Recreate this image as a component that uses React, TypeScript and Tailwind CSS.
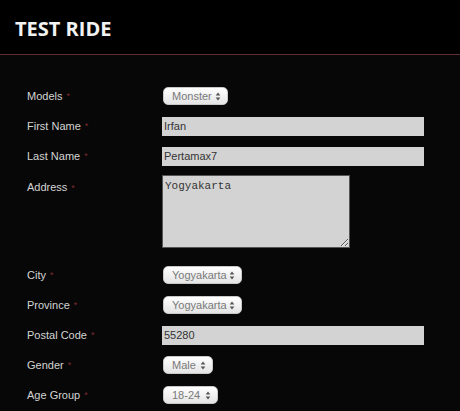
import { ReactNode } from 'react'

function Req() {
  return <span className="ml-[4px] text-[9px] leading-none text-[#7e2a33] align-middle">*</span>
}

function Row({ label, children, tall }: { label: string; children: ReactNode; tall?: boolean }) {
  return (
    <div className={`flex ${tall ? 'items-start h-[73px]' : 'items-center h-[20px]'}`}>
      <div className={`w-[135px] shrink-0 text-[11px] text-[#d4d4d4] ${tall ? 'pt-[4px]' : ''}`}>
        {label}
        <Req />
      </div>
      {children}
    </div>
  )
}

function Select({ value, width }: { value: string; width: string }) {
  return (
    <div
      className={`${width} ml-px h-[18px] flex items-center justify-between pl-[8px] pr-[6px] rounded-[5px] border border-[#c8c8c8] bg-linear-to-b from-white to-[#e4e4e4] text-[11px] text-[#7a7a7a] whitespace-nowrap`}
    >
      <span>{value}</span>
      <svg width="6" height="9" viewBox="0 0 6 10" className="fill-[#555] shrink-0">
        <path d="M3 0.5 L5.6 4 H0.4 Z" />
        <path d="M3 9.5 L5.6 6 H0.4 Z" />
      </svg>
    </div>
  )
}

function TextInput({ value }: { value: string }) {
  return (
    <input
      defaultValue={value}
      className="w-[262px] h-[19px] bg-[#d3d3d3] px-[2px] text-[11px] text-[#333] outline-none font-['Liberation_Sans',Arial,sans-serif]"
    />
  )
}

export default function App() {
  return (
    <div className="w-[460px] h-[411px] overflow-hidden bg-[#070707] font-['Liberation_Sans',Arial,sans-serif]">
      <div className="h-[55px] flex items-center px-[15px] bg-black border-b border-[#5e2e38]">
        <h1 className="font-['Open_Sans',sans-serif] font-bold text-[20px] text-[#f2f2f2] mt-[3px]">TEST RIDE</h1>
      </div>

      <div className="pl-[27px] pt-[31px] flex flex-col">
        <Row label="Models">
          <Select value="Monster" width="w-[65px]" />
        </Row>
        <div className="h-[10px]" />
        <Row label="First Name">
          <TextInput value="Irfan" />
        </Row>
        <div className="h-[10px]" />
        <Row label="Last Name">
          <TextInput value="Pertamax7" />
        </Row>
        <div className="h-[9px]" />
        <Row label="Address" tall>
          <textarea
            defaultValue="Yogyakarta"
            className="w-[188px] h-[73px] bg-[#d3d3d3] border border-[#555] px-[2px] py-[2px] text-[11px] text-[#333] outline-none font-['Liberation_Mono','Courier_New',monospace]"
          />
        </Row>
        <div className="h-[17px]" />
        <Row label="City">
          <Select value="Yogyakarta" width="w-[79px]" />
        </Row>
        <div className="h-[10px]" />
        <Row label="Province">
          <Select value="Yogyakarta" width="w-[79px]" />
        </Row>
        <div className="h-[10px]" />
        <Row label="Postal Code">
          <TextInput value="55280" />
        </Row>
        <div className="h-[10px]" />
        <Row label="Gender">
          <Select value="Male" width="w-[50px]" />
        </Row>
        <div className="h-[10px]" />
        <Row label="Age Group">
          <Select value="18-24" width="w-[55px]" />
        </Row>
      </div>
    </div>
  )
}
